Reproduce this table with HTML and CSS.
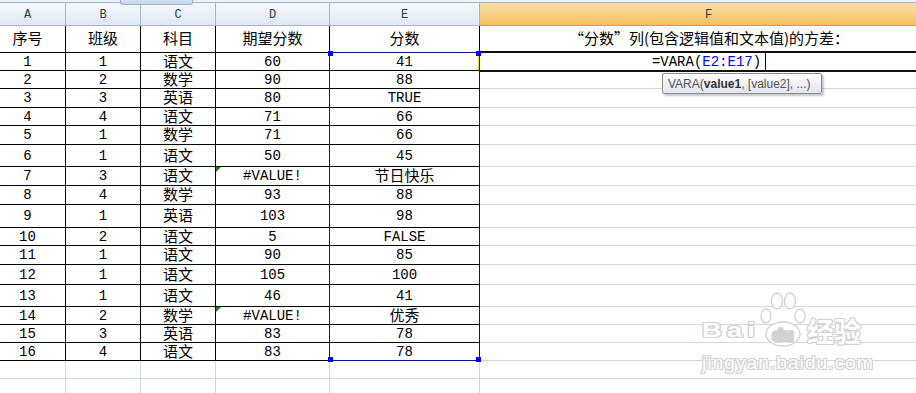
FILE: index.html
```html
<!DOCTYPE html>
<html lang="zh-CN">
<head>
<meta charset="utf-8">
<title>VARA</title>
<link rel="stylesheet" href="styles.css">
</head>
<body>
<div class="sheet">
  <div class="topstrip"></div>
  <div class="grid">
    <div class="c h">A</div><div class="c h">B</div><div class="c h">C</div><div class="c h">D</div><div class="c h">E</div><div class="c h sel">F</div>

    <div class="c zh">序号</div><div class="c zh">班级</div><div class="c zh">科目</div><div class="c zh">期望分数</div><div class="c zh">分数</div><div class="c zh fx">“分数”列(包含逻辑值和文本值)的方差：</div>

    <div class="c">1</div><div class="c">1</div><div class="c zh">语文</div><div class="c">60</div><div class="c">41</div><div class="c fx edit">=VARA(<span class="ref">E2:E17</span>)<span class="caret"></span></div>
    <div class="c">2</div><div class="c">2</div><div class="c zh">数学</div><div class="c">90</div><div class="c">88</div><div class="c g"></div>
    <div class="c">3</div><div class="c">3</div><div class="c zh">英语</div><div class="c">80</div><div class="c">TRUE</div><div class="c g"></div>
    <div class="c">4</div><div class="c">4</div><div class="c zh">语文</div><div class="c">71</div><div class="c">66</div><div class="c g"></div>
    <div class="c">5</div><div class="c">1</div><div class="c zh">数学</div><div class="c">71</div><div class="c">66</div><div class="c g"></div>
    <div class="c">6</div><div class="c">1</div><div class="c zh">语文</div><div class="c">50</div><div class="c">45</div><div class="c g"></div>
    <div class="c">7</div><div class="c">3</div><div class="c zh">语文</div><div class="c err">#VALUE!</div><div class="c zh">节日快乐</div><div class="c g"></div>
    <div class="c">8</div><div class="c">4</div><div class="c zh">数学</div><div class="c">93</div><div class="c">88</div><div class="c g"></div>
    <div class="c">9</div><div class="c">1</div><div class="c zh">英语</div><div class="c">103</div><div class="c">98</div><div class="c g"></div>
    <div class="c">10</div><div class="c">2</div><div class="c zh">语文</div><div class="c">5</div><div class="c">FALSE</div><div class="c g"></div>
    <div class="c">11</div><div class="c">1</div><div class="c zh">语文</div><div class="c">90</div><div class="c">85</div><div class="c g"></div>
    <div class="c">12</div><div class="c">1</div><div class="c zh">语文</div><div class="c">105</div><div class="c">100</div><div class="c g"></div>
    <div class="c">13</div><div class="c">1</div><div class="c zh">语文</div><div class="c">46</div><div class="c">41</div><div class="c g"></div>
    <div class="c">14</div><div class="c">2</div><div class="c zh">数学</div><div class="c err">#VALUE!</div><div class="c zh">优秀</div><div class="c g"></div>
    <div class="c">15</div><div class="c">3</div><div class="c zh">英语</div><div class="c">83</div><div class="c">78</div><div class="c g"></div>
    <div class="c">16</div><div class="c">4</div><div class="c zh">语文</div><div class="c">83</div><div class="c">78</div><div class="c g"></div>

    <div class="c g"></div><div class="c g"></div><div class="c g"></div><div class="c g"></div><div class="c g"></div><div class="c g"></div>
    <div class="c g"></div><div class="c g"></div><div class="c g"></div><div class="c g"></div><div class="c g"></div><div class="c g"></div>
  </div>

  <div class="tab"></div>
  <div class="editframe"></div>
  <div class="yl"></div>
  <div class="range">
    <span class="hd tl"></span><span class="hd tr"></span><span class="hd bl"></span><span class="hd br"></span>
  </div>
  <div class="tip">VARA(<b>value1</b>, [value2], ...)</div>

  <div class="wm">
    <div class="wm-top">
      <span class="wm-bai"><span class="wm-bai-in">Bai</span></span>
      <svg class="paw" width="48" height="56" viewBox="0 0 48 56">
        <g fill="#fff" stroke="#d4d4d4" stroke-width="1.4">
          <ellipse cx="7" cy="24" rx="5" ry="7"/>
          <ellipse cx="18" cy="9" rx="5.5" ry="8"/>
          <ellipse cx="31" cy="9" rx="5.5" ry="8"/>
          <ellipse cx="41" cy="24" rx="5" ry="7"/>
          <ellipse cx="24" cy="42" rx="17" ry="12"/>
        </g>
        <text x="24" y="49" text-anchor="middle" class="paw-du">du</text>
      </svg>
      <span class="wm-jy">经验</span>
    </div>
    <div class="wm-url">jingyan.baidu.com</div>
  </div>
</div>
</body>
</html>
```
FILE: styles.css
```css
* { box-sizing: border-box; margin: 0; padding: 0; }
html, body { width: 916px; height: 393px; overflow: hidden; background: #fff; }

.sheet {
  position: relative;
  width: 916px;
  height: 393px;
  overflow: hidden;
  font-family: "Liberation Mono", "Noto Sans CJK SC", monospace;
  font-size: 14px;
  color: #000;
}

.topstrip {
  height: 3px;
  background: #eef3f9;
  border-bottom: 1px solid #9db4d3;
}

.grid {
  display: grid;
  margin-left: -10px;
  width: 948px;
  grid-template-columns: 76px 75px 75px 114px 150px 458px;
  grid-template-rows: 23px 27px 18px 18px 19px 18px 19px 22px 19px 19px 23px 18px 19px 20px 22px 18px 18px 18px 18px 18px;
}

.c {
  display: flex;
  align-items: center;
  justify-content: center;
  border-right: 1px solid #000;
  border-bottom: 1px solid #000;
  line-height: 14px;
  white-space: nowrap;
  position: relative;
}

.g { border-right-color: #d0d7e5; border-bottom-color: #d0d7e5; }

.h {
  background: linear-gradient(#f7f9fd, #dfe7f2);
  border-right: 1px solid #9eb6ce;
  border-bottom: 1px solid #9eb6ce;
  color: #27413e;
  font-size: 12px;
  padding-top: 1px;
}
.h.sel {
  background: linear-gradient(#f9dea9, #f2bf62);
  border-bottom-color: #f29436;
  border-right-color: #f29436;
}

.zh {
  font-family: "Noto Sans CJK SC", sans-serif;
  font-size: 15px;
  line-height: 15px;
  padding-bottom: 3px;
}

.fx { border-right: none; }
.edit { border-bottom-color: #000; }

.ref { color: #0000ff; }
.caret {
  display: inline-block;
  width: 1px;
  height: 19px;
  background: #000;
  margin-left: 4px;
}

.err::before {
  content: "";
  position: absolute;
  left: 0;
  top: 0;
  border-top: 5px solid #0f8a0f;
  border-right: 5px solid transparent;
}

.tab {
  position: absolute;
  left: 120px;
  top: 0;
  width: 73px;
  height: 5px;
  background: linear-gradient(#d6e3f3, #c3d4eb);
  border: 1px solid #9cb2d0;
  border-top: none;
  border-radius: 0 0 3px 3px;
}

.editframe {
  position: absolute;
  left: 479px;
  top: 51px;
  width: 460px;
  height: 21px;
  border-top: 2px solid #111;
  border-bottom: 2px solid #111;
}

.yl {
  position: absolute;
  left: 478px;
  top: 53px;
  width: 1px;
  height: 17px;
  background: #f5e400;
}

.range {
  position: absolute;
  left: 329px;
  top: 52px;
  width: 151px;
  height: 309px;
  border: 1px solid #0000ff;
}
.hd {
  position: absolute;
  width: 5px;
  height: 5px;
  background: #0000ff;
}
.tl { left: -2px; top: -2px; }
.tr { left: 146px; top: -2px; }
.bl { left: -2px; top: 304px; }
.br { left: 146px; top: 304px; }

.tip {
  position: absolute;
  left: 662px;
  top: 73px;
  width: 160px;
  height: 21px;
  border: 1px solid #8c8c8c;
  border-radius: 2px;
  background: linear-gradient(#ffffff, #e3e5ef);
  box-shadow: 2px 2px 2px rgba(0, 0, 0, 0.22);
  font-family: "Liberation Sans", sans-serif;
  font-size: 12px;
  color: #505050;
  padding-left: 5px;
  display: flex;
  align-items: center;
  white-space: nowrap;
}
.tip b { color: #333; }

.wm {
  position: absolute;
  left: 702px;
  top: 292px;
  color: #fff;
  font-family: "Liberation Sans", sans-serif;
  font-weight: bold;
  text-shadow: 1px 0 #d2d2d2, -1px 0 #d2d2d2, 0 1px #d2d2d2, 0 -1px #d2d2d2,
    1px 1px #d2d2d2, -1px -1px #d2d2d2, 1px -1px #d2d2d2, -1px 1px #d2d2d2;
}
.wm-top {
  display: flex;
  align-items: flex-start;
}
.wm-bai {
  display: block;
  width: 57px;
  margin-top: 27px;
}
.wm-bai-in {
  display: inline-block;
  font-size: 21px;
  letter-spacing: 4px;
  line-height: 1;
  transform: scaleX(1.3);
  transform-origin: 0 0;
}
.paw-du {
  font-family: "Liberation Sans", sans-serif;
  font-size: 17px;
  font-weight: bold;
  fill: #fff;
  stroke: #d2d2d2;
  stroke-width: 0.9;
}
.wm-jy {
  font-family: "Noto Sans CJK SC", sans-serif;
  font-size: 27px;
  line-height: 1;
  margin-top: 25px;
}
.wm-url {
  font-size: 19px;
  font-weight: normal;
  letter-spacing: 1.1px;
  line-height: 1;
  margin-top: 5px;
}
```
